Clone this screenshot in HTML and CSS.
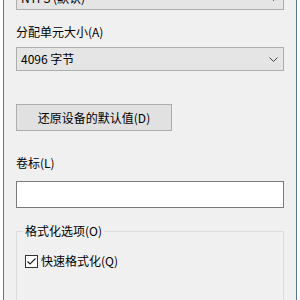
FILE: index.html
```html
<!DOCTYPE html>
<html>
<head>
 <meta charset="utf-8" />
 <title>格式化</title>
 <link rel="stylesheet" href="styles.css">
</head>
<body>
 <div class="window">
  <div class="combo top">
   <span>NTFS (默认)</span>
   <svg class="chev" width="9" height="5" viewBox="0 0 9 5"><polyline points="0.5,0.5 4.5,4.5 8.5,0.5" /></svg>
  </div>

  <div class="label">分配单元大小(A)</div>
  <div class="combo">
   <span>4096 字节</span>
   <svg class="chev" width="9" height="5" viewBox="0 0 9 5"><polyline points="0.5,0.5 4.5,4.5 8.5,0.5" /></svg>
  </div>

  <button class="btn">还原设备的默认值(D)</button>

  <div class="label name">卷标(L)</div>
  <div class="input"></div>

  <fieldset class="group">
   <legend>格式化选项(O)</legend>
   <div class="check">
    <svg class="box" width="13" height="13" viewBox="0 0 13 13">
     <rect x="0.5" y="0.5" width="12" height="12" fill="#fff" stroke="#333" />
     <polyline points="2.5,6.5 5,9 10.5,3.5" fill="none" stroke="#222" stroke-width="1.2" />
    </svg>
    <span>快速格式化(Q)</span>
   </div>
  </fieldset>
 </div>
</body>
</html>
```

FILE: styles.css
```css
* {
 box-sizing: border-box;
}
body {
 margin: 0;
 background: #fff;
 font-family: "Noto Sans CJK SC", "Liberation Sans", sans-serif;
 font-size: 12px;
 color: #000;
}
.window {
 margin-left: 3px;
 width: 294px;
 height: 300px;
 overflow: hidden;
 background: #f0f0f0;
 border-left: 1px solid #56789a;
 border-right: 1px solid #56789a;
 padding: 0 12px;
}
.combo {
 display: flex;
 align-items: center;
 justify-content: space-between;
 height: 24px;
 margin-top: 7px;
 padding: 0 5px 0 4px;
 background: #e5e5e5;
 border: 1px solid #adadad;
 line-height: 16px;
}
.combo.top {
 margin-top: -14px;
}
.chev polyline {
 fill: none;
 stroke: #444;
 stroke-width: 1;
}
.label {
 margin-top: 14px;
 line-height: 16px;
}
.btn {
 display: block;
 margin-top: 33px;
 width: 156px;
 height: 27px;
 background: #e1e1e1;
 border: 1px solid #adadad;
 font: inherit;
 color: #000;
 padding: 0;
}
.label.name {
 margin-top: 24px;
}
.input {
 margin-top: 10px;
 height: 27px;
 background: #fff;
 border: 1px solid #7a7a7a;
}
.group {
 margin: 15px 0 0;
 height: 120px;
 border: 1px solid #dcdcdc;
 padding: 0 6px;
}
.group legend {
 padding: 0 2px;
 line-height: 16px;
}
.check {
 display: flex;
 align-items: center;
 gap: 3px;
 margin: 14px 0 0 2px;
 line-height: 16px;
}
.check .box {
 display: block;
}
```
